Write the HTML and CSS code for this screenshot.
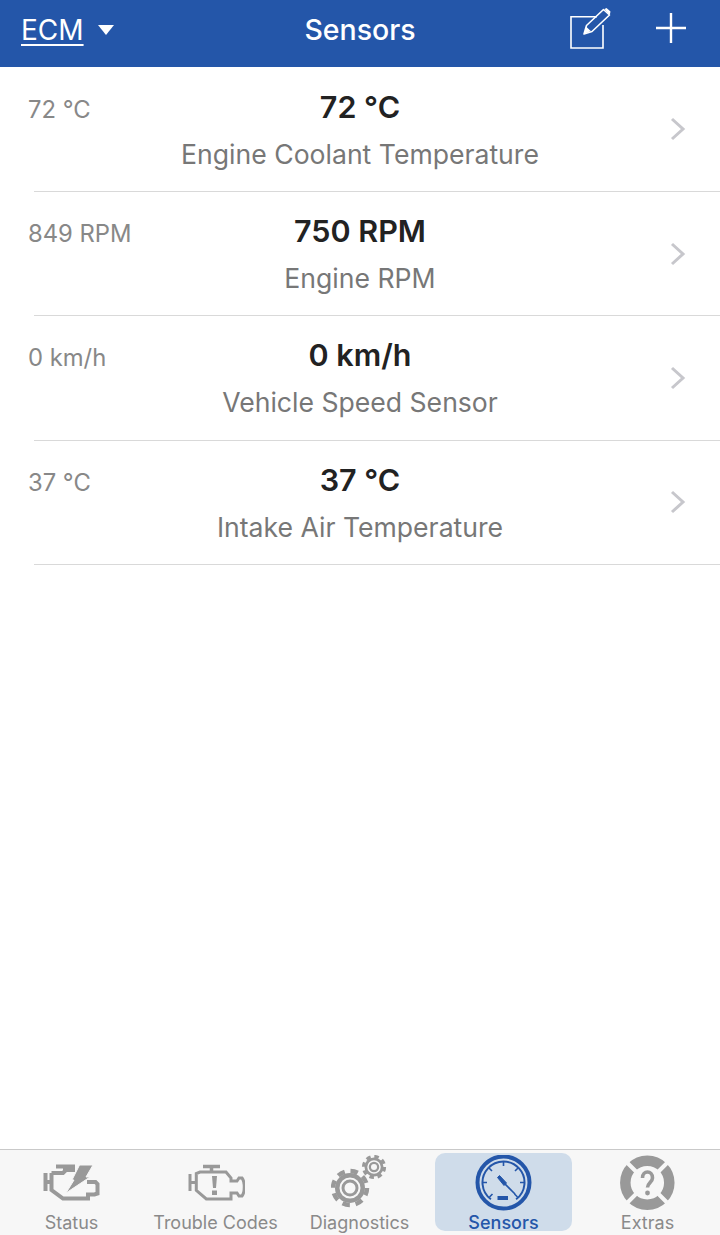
FILE: index.html
```html
<!DOCTYPE html>
<html lang="en">
<head>
  <meta charset="UTF-8" />
  <meta name="viewport" content="width=device-width, initial-scale=1" />
  <title>Sensors</title>
  <link rel="stylesheet" href="styles.css">
</head>
<body>
  <div class="app">
    <header class="topbar">
      <div class="module">
        <span class="module-name">ECM</span>
        <svg class="caret" width="18" height="12" viewBox="0 0 18 12"><path d="M1 1h16l-8 10z" fill="#fff"/></svg>
      </div>
      <h1 class="title">Sensors</h1>
      <div class="actions">
        <svg class="icon-edit" width="42" height="41" viewBox="0 0 42 41" fill="none">
          <path d="M27 8.8H1V40h32V17" stroke="#fff" stroke-width="1.6"/>
          <path d="M14 26l2.5-8.5L33.5 1.5l6 5.5L22 23.5z" stroke="#fff" stroke-width="1.6" stroke-linejoin="round"/>
          <path d="M14 26l2.2-7.2 4.6 4.2z M34.5 1l2-1 4 3.5-.5 2.5-1 .5z" fill="#fff"/>
        </svg>
        <svg class="icon-plus" width="30" height="30" viewBox="0 0 30 30"><path d="M15 0v30M0 15h30" stroke="#fff" stroke-width="2.4"/></svg>
      </div>
    </header>

    <main class="list">
      <div class="row">
        <div class="raw">72 °C</div>
        <div class="reading"><div class="value">72 °C</div><div class="name">Engine Coolant Temperature</div></div>
        <svg class="chevron" width="16" height="24" viewBox="0 0 16 24"><path d="M2 2l11 10L2 22" fill="none" stroke="#c7c7cc" stroke-width="3"/></svg>
      </div>
      <div class="sep"></div>
      <div class="row">
        <div class="raw">849 RPM</div>
        <div class="reading"><div class="value">750 RPM</div><div class="name">Engine RPM</div></div>
        <svg class="chevron" width="16" height="24" viewBox="0 0 16 24"><path d="M2 2l11 10L2 22" fill="none" stroke="#c7c7cc" stroke-width="3"/></svg>
      </div>
      <div class="sep"></div>
      <div class="row">
        <div class="raw">0 km/h</div>
        <div class="reading"><div class="value">0 km/h</div><div class="name">Vehicle Speed Sensor</div></div>
        <svg class="chevron" width="16" height="24" viewBox="0 0 16 24"><path d="M2 2l11 10L2 22" fill="none" stroke="#c7c7cc" stroke-width="3"/></svg>
      </div>
      <div class="sep"></div>
      <div class="row">
        <div class="raw">37 °C</div>
        <div class="reading"><div class="value">37 °C</div><div class="name">Intake Air Temperature</div></div>
        <svg class="chevron" width="16" height="24" viewBox="0 0 16 24"><path d="M2 2l11 10L2 22" fill="none" stroke="#c7c7cc" stroke-width="3"/></svg>
      </div>
      <div class="sep"></div>
    </main>

    <nav class="tabs">
      <div class="tab">
        <svg class="tab-icon" width="58" height="58" viewBox="0 -10 58 58" fill="none" stroke="#999" stroke-width="4">
          <path d="M2.5 8v18M2.5 17H8M8.5 8v17l11.5 8.5h25v-4h6.5l3-1V19l-2-2H44"/>
          <path d="M8.5 8H20l3-3h9"/>
          <path d="M13 1.5h19M22 2v4"/>
          <path d="M36.5 0H50l-7 12h4L23 28l8-13h-2z" fill="#999" stroke="#f7f7f7" stroke-width="1"/>
        </svg>
        <span class="tab-label">Status</span>
      </div>
      <div class="tab">
        <svg class="tab-icon" width="58" height="58" viewBox="0 -10 58 58" fill="none" stroke="#999" stroke-width="3">
          <path d="M3 9v17M3 17.5h6M9.3 9v16.3L19.3 34H44v-6h6l2 3h3c3-4 3-14 0-18h-3l-2 3h-6v-3l-5-6H13L9.3 8.5z"/>
          <path d="M16 1.5h17M24.5 2v4" stroke-width="3.5"/>
          <path d="M25 11h5l-1 12h-3z" fill="#999" stroke="none"/>
          <rect x="25" y="25.5" width="5" height="4.5" fill="#999" stroke="none"/>
        </svg>
        <span class="tab-label">Trouble Codes</span>
      </div>
      <div class="tab">
        <svg class="tab-icon" width="58" height="58" viewBox="0 0 58 58">
          <circle cx="19" cy="33" r="15" fill="#999"/>
          <circle cx="19" cy="33" r="17" fill="none" stroke="#999" stroke-width="4.5" stroke-dasharray="7.5 5.85"/>
          <circle cx="19" cy="33" r="9.5" fill="none" stroke="#f7f7f7" stroke-width="2"/>
          <circle cx="19" cy="33" r="5.5" fill="#f7f7f7"/>
          <circle cx="43" cy="12" r="9.5" fill="#999"/>
          <circle cx="43" cy="12" r="10.5" fill="none" stroke="#999" stroke-width="3.2" stroke-dasharray="4.5 3.75"/>
          <circle cx="43" cy="12" r="6" fill="none" stroke="#f7f7f7" stroke-width="1.5"/>
          <circle cx="43" cy="12" r="3" fill="#f7f7f7"/>
        </svg>
        <span class="tab-label">Diagnostics</span>
      </div>
      <div class="tab tab-active">
        <svg class="tab-icon" width="58" height="58" viewBox="0 0 58 58" fill="none" stroke="#2456a9">
          <circle cx="28.5" cy="27.5" r="26" stroke-width="4"/>
          <path d="M15.9 44.3A21 21 0 1 1 41.1 44.3" stroke-width="2"/>
          <path d="M28.5 7v4M14 13l3 3M43 13l-3 3M8 27.5h4M49 27.5h-4M14.5 42l3-3M42.5 42l-3-3" stroke-width="1.6"/>
          <path d="M26 25l14 14" stroke-width="1.6"/>
          <path d="M22.5 22.5l2-2 7 7.5-2.5 2.5z" fill="#2456a9" stroke-width="1"/>
          <rect x="22.5" y="41" width="10.5" height="4" fill="#2456a9" stroke="none"/>
        </svg>
        <span class="tab-label">Sensors</span>
      </div>
      <div class="tab">
        <svg class="tab-icon" width="58" height="58" viewBox="0 0 58 58" fill="none" stroke="#999">
          <circle cx="28.3" cy="27.7" r="22" stroke-width="10.5"/>
          <path d="M8.5 8l11 11M48 8L37 19M8.5 47.5l11-11M48 47.5l-11-11" stroke="#f7f7f7" stroke-width="4"/>
          <path d="M23.5 23c0-8 10-8 10 0 0 4-5 5-5 9.5" stroke-width="3.6"/>
          <circle cx="28.5" cy="38" r="2.4" fill="#999" stroke="none"/>
        </svg>
        <span class="tab-label">Extras</span>
      </div>
    </nav>
  </div>
</body>
</html>
```

FILE: styles.css
```css
* {
  box-sizing: border-box;
}
body {
  margin: 0;
  font-family: 'Inter', 'Liberation Sans', sans-serif;
  background: #fff;
}

.app {
  height: 1235px;
  display: flex;
  flex-direction: column;
  overflow: hidden;
}

/* top bar */
.topbar {
  height: 67px;
  flex: none;
  background: #2456a9;
  color: #fff;
  display: grid;
  grid-template-columns: 1fr auto 1fr;
  align-items: center;
  padding: 0 34px 8px 21px;
}
.module {
  display: flex;
  align-items: center;
  gap: 13px;
}
.module-name {
  font-size: 28px;
  text-decoration: underline;
  text-underline-offset: 4px;
  text-decoration-thickness: 1.5px;
}
.title {
  margin: 0 0 0 13px;
  font-size: 28.5px;
  font-weight: 500;
}
.actions {
  display: flex;
  justify-content: flex-end;
  align-items: center;
  gap: 44px;
}
.icon-edit {
  margin-bottom: 2px;
}
.icon-plus {
  margin-bottom: 3px;
}

/* sensor rows */
.list {
  flex: 1;
  padding-top: 0.5px;
}
.row {
  height: 123.4px;
  display: grid;
  grid-template-columns: 1fr auto 1fr;
  padding: 0 34px 0 28px;
}
.raw {
  font-size: 23.8px;
  color: #888;
  padding-top: 27px;
}
.reading {
  text-align: center;
  padding-top: 20px;
  margin-left: 3px;
  margin-right: -3px;
}
.value {
  font-size: 30.5px;
  font-weight: 600;
  color: #222;
}
.name {
  font-size: 26.6px;
  color: #777;
  margin-top: 13px;
}
.chevron {
  justify-self: end;
  align-self: center;
}
.sep {
  height: 1px;
  margin-left: 34px;
  background: #d9d9d9;
}

/* bottom tabs */
.tabs {
  height: 86px;
  flex: none;
  display: grid;
  grid-template-columns: repeat(5, 1fr);
  background: #f7f7f7;
  border-top: 1px solid #c9c9c9;
  padding-top: 3px;
}
.tab {
  display: flex;
  flex-direction: column;
  align-items: center;
  justify-content: flex-end;
  height: 78px;
  margin: 0 -1px;
  border-radius: 10px;
}
.tab-icon {
  flex: none;
  margin-bottom: 1px;
}
.tab-label {
  font-size: 18px;
  color: #8a8a8a;
  line-height: 18px;
  margin: 0 1px -1px 0;
  white-space: nowrap;
}
.tab-active {
  background: #cfdcea;
  margin: 0 4px 0 3px;
}
.tab-active .tab-label {
  color: #2456a9;
  font-weight: 500;
  margin-right: 0;
}
```
